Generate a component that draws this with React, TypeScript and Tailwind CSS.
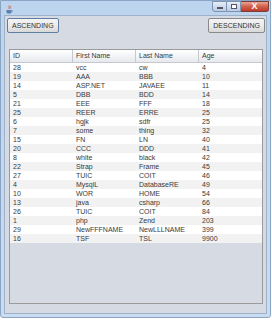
import React from 'react';

type Row = [number, string, string, number];

const rows: Row[] = [
  [28, 'vcc', 'cw', 4],
  [19, 'AAA', 'BBB', 10],
  [14, 'ASP.NET', 'JAVAEE', 11],
  [5, 'DBB', 'BDD', 14],
  [21, 'EEE', 'FFF', 18],
  [25, 'REER', 'ERRE', 25],
  [6, 'hgjk', 'sdfr', 25],
  [7, 'some', 'thing', 32],
  [15, 'FN', 'LN', 40],
  [20, 'CCC', 'DDD', 41],
  [8, 'white', 'black', 42],
  [22, 'Strap', 'Frame', 45],
  [27, 'TUIC', 'COIT', 46],
  [4, 'MysqlL', 'DatabaseRE', 49],
  [10, 'WOR', 'HOME', 54],
  [13, 'java', 'csharp', 66],
  [26, 'TUIC', 'COIT', 84],
  [1, 'php', 'Zend', 203],
  [29, 'NewFFFNAME', 'NewLLLNAME', 399],
  [16, 'TSF', 'TSL', 9900],
];

const headers = ['ID', 'First Name', 'Last Name', 'Age'];

// petite icône java (tasse)
function JavaIcon() {
  return (
    <svg width="9" height="9" viewBox="0 0 9 9">
      <path d="M4 0.5 C5 2 3 2.5 4.5 4" stroke="#e0542a" strokeWidth="0.9" fill="none" />
      <path d="M5.5 1 C6.3 2 5 2.6 5.8 3.6" stroke="#e0542a" strokeWidth="0.7" fill="none" />
      <path d="M1.5 5 H6.5 V7 C6.5 8 5.5 8.5 4 8.5 C2.5 8.5 1.5 8 1.5 7 Z" fill="#5b7fb0" />
      <path d="M6.5 5.5 C8 5.5 8 7 6.5 7" stroke="#5b7fb0" strokeWidth="0.7" fill="none" />
    </svg>
  );
}

function WinButton({ label, focused }: { label: string; focused?: boolean }) {
  return (
    <button
      className={`h-[15px] px-[4px] rounded-[2px] border text-[7px] leading-none text-[#333] bg-gradient-to-b from-[#f4f4f4] via-[#ebebeb] to-[#d8d8d8] ${
        focused ? 'border-[#5f7ea3]' : 'border-[#8a8a8a]'
      }`}
    >
      {label}
    </button>
  );
}

export default function App() {
  return (
    <div
      className="w-[272px] h-[320px] bg-white"
      style={{ fontFamily: '"Liberation Sans", Arial, sans-serif' }}
    >
      <div className="w-[271px] h-[318px] flex flex-col bg-gradient-to-b from-[#bcd4ee] to-[#c9dcf1] border border-[#8aa4c3] rounded-b-[3px]">
        {/* barre de titre */}
        <div className="h-[14px] flex items-start justify-between pl-[4px] pr-[1px]">
          <div className="pt-[4px]">
            <JavaIcon />
          </div>
          <div className="flex h-[11px]">
            <div className="w-[15px] h-full flex items-center justify-center rounded-bl-[3px] border border-[#7d93b0] bg-gradient-to-b from-[#e6eef8] to-[#b9cbe2]">
              <div className="w-[6px] h-[2px] bg-white border border-[#556] mt-[3px]" />
            </div>
            <div className="w-[14px] h-full flex items-center justify-center border-y border-r border-[#7d93b0] bg-gradient-to-b from-[#e6eef8] to-[#b9cbe2]">
              <div className="w-[6px] h-[5px] border border-[#556] bg-white" />
            </div>
            <div className="w-[28px] h-full flex items-center justify-center rounded-br-[3px] border-y border-r border-[#7a3c35] bg-gradient-to-b from-[#e8a493] via-[#d0604b] to-[#c0392b] text-white text-[9px] font-bold leading-none">
              X
            </div>
          </div>
        </div>

        {/* contenu */}
        <div className="flex-1 mx-[3px] mb-[3px] bg-[#d6dbe3] border border-[#9fb1c8] flex flex-col">
          <div className="flex justify-between pl-[2px] pr-[1px] pt-[2px]">
            <WinButton label="ASCENDING" focused />
            <WinButton label="DESCENDING" />
          </div>

          <div className="mt-[16px] ml-[4px] mr-[3px] mb-[9px] flex-1 border border-[#9a9a9a] flex flex-col">
            <div className="grid grid-cols-4 h-[13px] bg-gradient-to-b from-[#ffffff] to-[#e6e9ed] border-b border-[#c5c9cf]">
              {headers.map((h, i) => (
                <div
                  key={h}
                  className={`flex items-center pl-[3px] text-[7px] text-[#3a3a3a] ${
                    i < 3 ? 'border-r border-[#c5c9cf]' : ''
                  }`}
                >
                  {h}
                </div>
              ))}
            </div>
            <div className="flex flex-col">
              {rows.map((r, i) => (
                <div
                  key={i}
                  className={`grid grid-cols-4 h-[9px] items-center text-[7px] leading-none text-[#3a3a3a] ${
                    i % 2 === 0 ? 'bg-white' : 'bg-[#f2f2f2]'
                  }`}
                >
                  <div className="pl-[3px]">{r[0]}</div>
                  <div className="pl-[3px]">{r[1]}</div>
                  <div className="pl-[3px]">{r[2]}</div>
                  <div className="pl-[3px]">{r[3]}</div>
                </div>
              ))}
            </div>
          </div>
        </div>
      </div>
    </div>
  );
}
